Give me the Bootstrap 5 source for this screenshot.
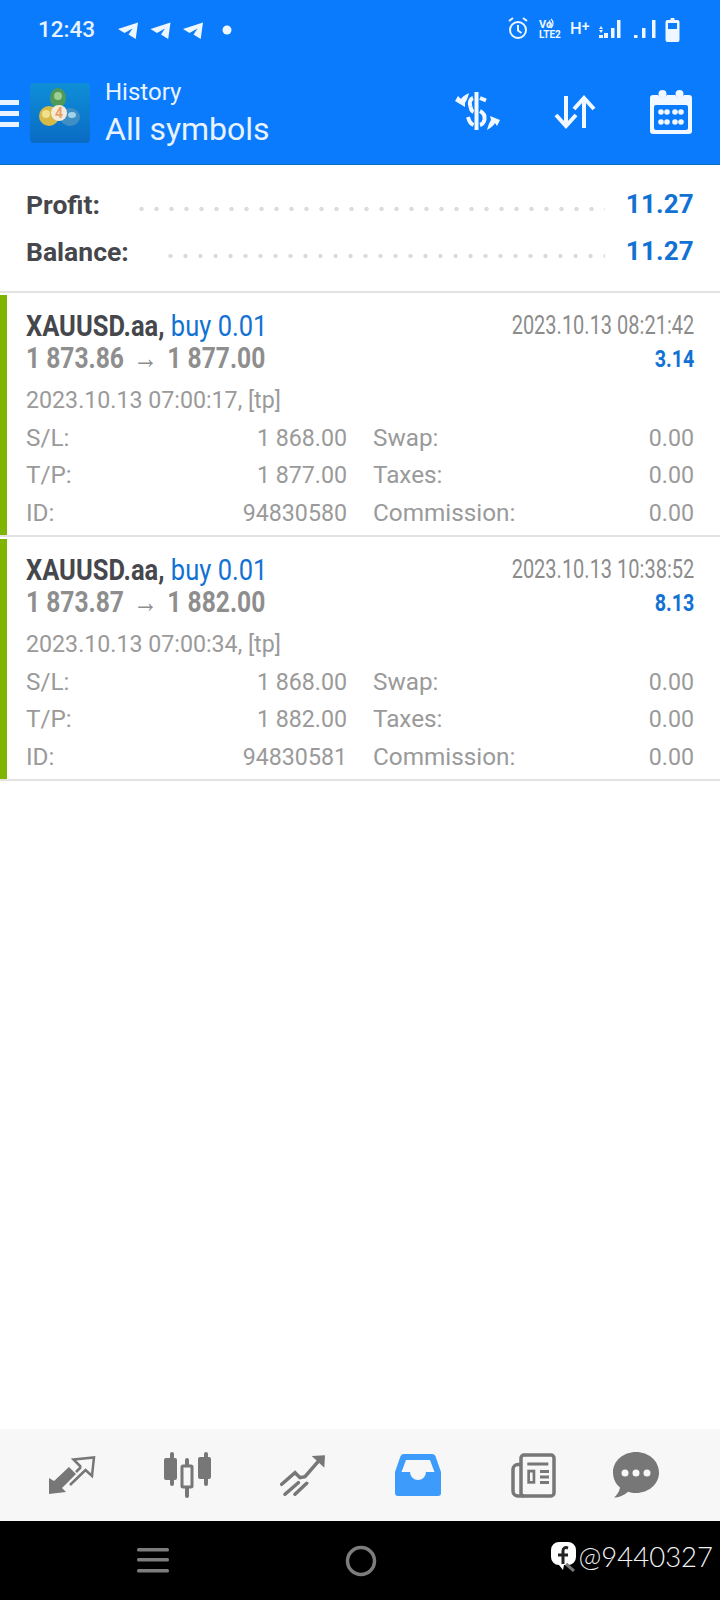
<!DOCTYPE html>
<html lang="en">
<head>
    <meta charset="UTF-8">
    <meta name="viewport" content="width=device-width, initial-scale=1.0">
    <title>History</title>
    <link rel="stylesheet" href="https://cdn.jsdelivr.net/npm/bootstrap@5.3.0/dist/css/bootstrap.min.css">
    <style>
        html, body { margin: 0; height: 1600px; overflow: hidden; }
        body { font-family: Roboto, "Liberation Sans", sans-serif; background: #fff; color: #444; }
        .page { height: 1600px; }
        .top-blue { background: #0a7bfd; height: 165px; border-bottom: 1px solid #0b6cc0; color: #e8f3ff; }
        .status { height: 60px; padding: 0 35px 0 38px; }
        .clock { font-size: 22.5px; font-weight: 500; width: 80px; }
        .appbar { height: 104px; }
        .burger { width: 19px; gap: 6px; margin-right: 11px; margin-top: 3px; }
        .burger i { display: block; height: 5px; background: #e8f3ff; }
        .app-logo { width: 60px; height: 60px; border-radius: 4px; background: linear-gradient(#0f8fd8, #0a6bc4); margin-right: 15px; margin-top: 2px; }
        .sub-title { font-size: 24px; line-height: 28px; }
        .main-title { font-size: 32px; line-height: 46px; }
        .summary { height: 128px; padding: 16px 26px 0 26px; border-bottom: 2px solid #e2e2e2; }
        .sum-row { height: 47px; }
        .sum-label { font-size: 26.5px; font-weight: 700; color: #45474c; }
        .sum-val { font-size: 26px; font-weight: 700; color: #1172d4; letter-spacing: .2px; }
        .dots { flex: 1; height: 4px; margin: 8px 21px 0 34px; background-image: radial-gradient(circle, #dcdcdc 2px, transparent 2.2px); background-size: 15px 4px; }
        .deal { height: 244px; border-bottom: 2px solid #e2e2e2; }
        .deal-bar { width: 7px; background: #7fb500; margin-top: 2px; }
        .deal-body { padding: 16px 26px 0 19px; }
        .line-a { height: 33px; }
        .line-b { height: 30px; }
        .squeeze { display: inline-block; transform-origin: left center; white-space: nowrap; }
        .squeeze-r { display: inline-block; transform-origin: right center; white-space: nowrap; }
        .sym { font-size: 30px; font-weight: 700; color: #45474c; transform: scaleX(.85); }
        .vol { font-weight: 400; color: #1172d4; }
        .close-time { font-size: 25px; color: #8c8c8c; transform: scaleX(.8); }
        .prices { font-size: 30px; font-weight: 700; color: #8e8e8e; transform: scaleX(.82); }
        .arrow-glyph { font-weight: 400; margin: 0 4px; }
        .gain { font-size: 24px; font-weight: 700; color: #1172d4; transform: scaleX(.82); margin-top: 3px; }
        .open-time { font-size: 23.2px; color: #9a9a9a; height: 38.5px; margin-top: 9px; }
        .meta { font-size: 23.2px; color: #9a9a9a; height: 37.4px; }
        .meta-key { font-size: 24.3px; }
        .meta-l { width: 321px; margin-right: 26px; }
        .meta-r { flex: 1; }
        .spacer { flex: 1; }
        .tabs { height: 92px; background: #f7f7f7; }
        .navkeys { height: 79px; background: #000; }
        .tag { color: #f2f2f2; font-family: Lato, sans-serif; font-weight: 300; font-size: 27.5px; right: 7px; top: 15px; gap: 3px; }
    </style>
</head>
<body>
<div class="page d-flex flex-column">
    <div class="top-blue">
        <div class="status d-flex align-items-center">
            <div class="clock">12:43</div>
            <svg width="120" height="24" viewBox="0 0 120 24">
                <g fill="#eef6ff">
                    <path transform="translate(0 3)" d="M0 8 20 1.500 17.700 18 10.500 13.500 14.500 7.500 6.500 12z"/>
                    <path transform="translate(32.500 3)" d="M0 8 20 1.500 17.700 18 10.500 13.500 14.500 7.500 6.500 12z"/>
                    <path transform="translate(65 3)" d="M0 8 20 1.500 17.700 18 10.500 13.500 14.500 7.500 6.500 12z"/>
                    <circle cx="109" cy="12" r="4.500"/>
                </g>
            </svg>
            <div class="spacer"></div>
            <svg width="180" height="30" viewBox="0 0 180 30">
                <g fill="none" stroke="#eef6ff" stroke-width="2">
                    <circle cx="13" cy="15" r="8"/>
                    <path d="M13 10v5.500l3.500 2.500M4 6l4-3M18 3l4 3"/>
                    <path stroke-width="1.200" d="M44 5.500a4 4 0 0 1 0 6M46 4a6 6 0 0 1 0 9"/>
                </g>
                <text x="34" y="12.500" font-size="11" font-weight="700" fill="#eef6ff" font-family="Roboto">Vo</text>
                <text x="34" y="22.500" font-size="10" font-weight="700" fill="#eef6ff" font-family="Roboto">LTE2</text>
                <text x="65" y="19" font-size="16.500" font-weight="500" fill="#eef6ff" font-family="Roboto">H<tspan font-size="14" dy="-3">+</tspan></text>
                <g fill="#eef6ff">
                    <path d="M94 14l2-3 2 3zM94 15l2 3 2-3z"/>
                    <rect x="94" y="20" width="4" height="3"/>
                    <rect x="99" y="18" width="4" height="5"/>
                    <rect x="106" y="13" width="3.500" height="10"/>
                    <rect x="112" y="5" width="3.500" height="18"/>
                    <rect x="129" y="20" width="3.500" height="3"/>
                    <rect x="137" y="13" width="3.500" height="10"/>
                    <rect x="147" y="5" width="3.500" height="18"/>
                    <path fill-rule="evenodd" d="M165.500 3h4v2h3a2 2 0 0 1 2 2v18a2 2 0 0 1-2 2h-10a2 2 0 0 1-2-2V7a2 2 0 0 1 2-2h3zM163 8v6h9V8z"/>
                </g>
            </svg>
        </div>
        <div class="appbar d-flex align-items-center">
            <div class="burger d-flex flex-column"><i></i><i></i><i></i></div>
            <div class="app-logo flex-shrink-0">
                <svg width="60" height="60" viewBox="0 0 60 60">
                    <ellipse cx="28" cy="15" rx="8" ry="10" fill="#4f9a5a"/>
                    <ellipse cx="28" cy="13" rx="4" ry="4" fill="#9fce92"/>
                    <ellipse cx="19" cy="33" rx="10" ry="10" fill="#d6b947"/>
                    <ellipse cx="16" cy="31" rx="4" ry="4" fill="#f0e08c"/>
                    <ellipse cx="40" cy="34" rx="10" ry="9" fill="#3f8fc4"/>
                    <ellipse cx="42" cy="32" rx="4" ry="3" fill="#a3d3ea"/>
                    <circle cx="29" cy="30" r="8" fill="#f4ebdc"/>
                    <text x="29" y="35" text-anchor="middle" font-size="14" font-weight="700" fill="#e8a264" font-family="Roboto">4</text>
                </svg>
            </div>
            <div style="margin-top:6px">
                <div class="sub-title">History</div>
                <div class="main-title">All symbols</div>
            </div>
            <div class="spacer"></div>
            <svg width="46" height="40" viewBox="0 0 46 40" style="margin-right:53px">
                <g fill="none" stroke="#f2f8ff" stroke-width="4">
                    <path d="M21.500 0v38"/>
                    <path d="M18 6C15 7 14 11 15.500 14.500M25 6l6 2.500M18.500 20C16 19 16 17.500 15.500 14.500M25 19c4 2 5 5 4.500 8.500-.5 3-2.500 5-4.500 5.500M13 25c1 4 3 7 5.500 8"/>
                </g>
                <path fill="#f2f8ff" d="M0 9l10 6v-4c2-3 3-6 4-10-4 2-7 4-8 6L3 4zM45 28l-10-4 1 4c-2 3-3 6-4 10 4-2 7-5 8-7l2 3z"/>
            </svg>
            <svg width="42" height="34" viewBox="0 0 42 34" style="margin-right:53px">
                <path d="M12 1v30M2 20l10 11 10-11M30 33V3M20 14 30 3l10 11" fill="none" stroke="#f2f8ff" stroke-width="4"/>
            </svg>
            <svg width="44" height="44" viewBox="0 0 44 44" style="margin-right:27px">
                <path fill="#f2f8ff" d="M4 5h5a5 5 0 0 0 9 0h8a5 5 0 0 0 9 0h5a3 3 0 0 1 3 3v33a3 3 0 0 1-3 3H4a3 3 0 0 1-3-3V8a3 3 0 0 1 3-3z"/>
                <circle cx="13.500" cy="4" r="4" fill="#f2f8ff"/><circle cx="30.500" cy="4" r="4" fill="#f2f8ff"/>
                <rect x="5" y="15" width="34" height="25" rx="2" fill="#0a7bfd"/>
                <g fill="#f2f8ff"><circle cx="12" cy="22" r="2.800"/><circle cx="18" cy="22" r="2.800"/><circle cx="26" cy="22" r="2.800"/><circle cx="32" cy="22" r="2.800"/><circle cx="12" cy="32" r="2.800"/><circle cx="18" cy="32" r="2.800"/><circle cx="26" cy="32" r="2.800"/><circle cx="32" cy="32" r="2.800"/></g>
            </svg>
        </div>
    </div>

    <div class="summary">
        <div class="sum-row d-flex align-items-center">
            <span class="sum-label">Profit:</span><span class="dots"></span><span class="sum-val">11.27</span>
        </div>
        <div class="sum-row d-flex align-items-center">
            <span class="sum-label">Balance:</span><span class="dots"></span><span class="sum-val">11.27</span>
        </div>
    </div>

    <div id="deals"></div>

    <div class="spacer"></div>

    <div class="tabs d-flex align-items-center">
        <svg width="47" height="38" viewBox="0 0 47 38" style="margin-left:49px">
            <path fill="#777" d="M0 38V22l5 3L20 11l7 7-14 14 4 4z"/>
            <path fill="none" stroke="#777" stroke-width="2.500" d="M32 11 24.500 3.500 45 1.500 43 20 36.500 14 21 29M32 11l-5 5"/>
        </svg>
        <svg width="48" height="46" viewBox="0 0 48 46" style="margin-left:67px">
            <g fill="#777">
                <rect x="7" y="0" width="4" height="34" rx="2"/><rect x="1" y="6" width="13" height="22" rx="2"/>
                <rect x="41" y="0" width="4" height="34" rx="2"/><rect x="35" y="5" width="13" height="22" rx="2"/>
                <rect x="22" y="6" width="4" height="40" rx="2"/>
            </g>
            <rect x="19" y="14" width="10" height="21" rx="1" fill="#f7f7f7" stroke="#777" stroke-width="3"/>
        </svg>
        <svg width="46" height="42" viewBox="0 0 46 42" style="margin-left:69px">
            <path fill="none" stroke="#777" stroke-width="3.500" stroke-linecap="round" d="M1.700 30.300 15 18.700l5 5 5-1L40 5.300"/>
            <path fill="#777" d="M31.700 2 45 1.300 44.300 13.700z"/>
            <path fill="none" stroke="#777" stroke-width="3.500" stroke-linecap="round" d="M5 40.300 18.300 28.700M15 40.300 26.700 29.300"/>
        </svg>
        <svg width="46" height="42" viewBox="0 0 46 42" style="margin-left:69px">
            <path fill="#3d9bfb" d="M9 0h28a4 4 0 0 1 3.600 2.400L46 18v21a3 3 0 0 1-3 3H3a3 3 0 0 1-3-3V18L5.400 2.400A4 4 0 0 1 9 0z"/>
            <path fill="#f7f7f7" d="M11 6h24l4.500 12H31a8 8 0 0 1-16 0H6.500z"/>
        </svg>
        <svg width="48" height="46" viewBox="0 0 48 46" style="margin-left:67px">
            <rect x="13" y="3" width="33" height="41" rx="3" fill="none" stroke="#777" stroke-width="3.500"/>
            <path fill="none" stroke="#777" stroke-width="3.500" d="M13 12.500h-3a5 5 0 0 0-5 5V39a5 5 0 0 0 5 5h6"/>
            <g fill="#777"><rect x="19.300" y="10.500" width="21" height="3"/><rect x="19.300" y="17.700" width="8" height="14"/><rect x="32" y="18" width="9" height="3"/><rect x="32" y="23.500" width="9" height="3"/><rect x="32" y="29" width="9" height="3"/></g>
            <rect x="22" y="20.500" width="2.600" height="8.500" fill="#f7f7f7"/>
        </svg>
        <svg width="46" height="46" viewBox="0 0 46 46" style="margin-left:57px">
            <path fill="#777" d="M23 0c12.700 0 23 8.900 23 20.500S35.700 41 23 41c-3 0-5.500-.4-8-1.300C11 43.500 6 45.500 1 45.500c3-2.500 5.500-6 6-10C2.500 31.800 0 26.500 0 20.500 0 8.900 10.300 0 23 0z"/>
            <g fill="#f7f7f7"><circle cx="12" cy="21" r="3.500"/><circle cx="23" cy="21" r="3.500"/><circle cx="34" cy="21" r="3.500"/></g>
        </svg>
    </div>

    <div class="navkeys d-flex align-items-center position-relative">
        <svg width="34" height="28" viewBox="0 0 34 28" style="margin-left:136px;margin-top:-1px">
            <g fill="#7d7d7d"><rect x="1" y="2" width="32" height="3.500" rx="1.500"/><rect x="1" y="12" width="32" height="3.500" rx="1.500"/><rect x="1" y="23" width="32" height="3.500" rx="1.500"/></g>
        </svg>
        <svg width="32" height="32" viewBox="0 0 32 32" style="margin-left:175px">
            <circle cx="16" cy="16" r="13.500" fill="none" stroke="#7d7d7d" stroke-width="3.500"/>
        </svg>
        <div class="tag position-absolute d-flex align-items-center">
            <svg width="25" height="30" viewBox="0 0 25 30">
                <path fill="#fff" d="M8 0h9a8 8 0 0 1 8 8v7a8 8 0 0 1-8 8h-4l-1 5-4-5A8 8 0 0 1 0 15V8a8 8 0 0 1 8-8z"/>
                <path fill="none" stroke="#222" stroke-width="3" d="M17 6c-3-1-5 0-5 3v13M7 13h10"/>
                <path stroke="#777" stroke-width="3" d="M15 22l8 7"/>
            </svg>
            <span>@9440327</span>
        </div>
    </div>
</div>

<script>
    const deals = [
        { from: "1 873.86", to: "1 877.00", closed: "2023.10.13 08:21:42", gain: "3.14", opened: "2023.10.13 07:00:17, [tp]", sl: "1 868.00", tp: "1 877.00", id: "94830580" },
        { from: "1 873.87", to: "1 882.00", closed: "2023.10.13 10:38:52", gain: "8.13", opened: "2023.10.13 07:00:34, [tp]", sl: "1 868.00", tp: "1 882.00", id: "94830581" }
    ];
    const metaRow = (a, b, c) => `
        <div class="meta d-flex align-items-center">
            <div class="meta-l d-flex justify-content-between align-items-center"><span class="meta-key">${a}</span><span>${b}</span></div>
            <div class="meta-r d-flex justify-content-between align-items-center"><span class="meta-key">${c}</span><span>0.00</span></div>
        </div>`;
    document.getElementById("deals").innerHTML = deals.map(d => `
        <div class="deal d-flex">
            <div class="deal-bar"></div>
            <div class="deal-body flex-grow-1">
                <div class="line-a d-flex justify-content-between align-items-center">
                    <span class="sym squeeze">XAUUSD.aa, <span class="vol">buy 0.01</span></span>
                    <span class="close-time squeeze-r">${d.closed}</span>
                </div>
                <div class="line-b d-flex justify-content-between align-items-center">
                    <span class="prices squeeze">${d.from} <span class="arrow-glyph">→</span> ${d.to}</span>
                    <span class="gain squeeze-r">${d.gain}</span>
                </div>
                <div class="open-time d-flex align-items-center">${d.opened}</div>
                ${metaRow("S/L:", d.sl, "Swap:")}
                ${metaRow("T/P:", d.tp, "Taxes:")}
                ${metaRow("ID:", d.id, "Commission:")}
            </div>
        </div>`).join("");
</script>
<script src="https://cdn.jsdelivr.net/npm/bootstrap@5.3.0/dist/js/bootstrap.bundle.min.js"></script>
</body>
</html>
